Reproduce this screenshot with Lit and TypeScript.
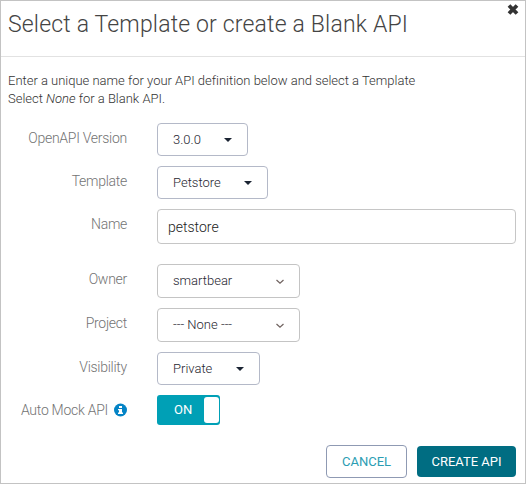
import { LitElement, html, css, svg } from "lit";
import { customElement, property } from "lit/decorators.js";

@customElement("select-box")
class SelectBox extends LitElement {
  @property() value = "";
  @property() arrow = "caret";
  static styles = css`
    :host {
      display: flex;
      box-sizing: border-box;
      align-items: center;
      justify-content: space-between;
      border: 1px solid #b4b9c8;
      border-radius: 4px;
      padding: 0 14px 0 15px;
      height: 33px;
      color: #262630;
      font-size: 13px;
      background: #fff;
    }
    :host([arrow="chevron"]) {
      height: 34px;
      padding-bottom: 1px;
      border-color: #c4c4c4;
    }
    svg { display: block; }
  `;
  render() {
    return html`<span>${this.value}</span>
      <svg width="10" height="8" viewBox="0 0 10 8">
        ${this.arrow === "caret"
          ? svg`<path d="M1 2h8L5 6z" fill="#1b2433" />`
          : svg`<path d="M1.500 3L5 6.300L8.500 3" fill="none" stroke="#6f625f" stroke-width="1.200" />`}
      </svg>`;
  }
}

@customElement("app-root")
class AppRoot extends LitElement {
  static styles = css`
    :host {
      display: flex;
      flex-direction: column;
      box-sizing: border-box;
      width: 526px;
      height: 484px;
      border: 1px solid #c3c3c3;
      background: #fff;
      position: relative;
      font-family: Roboto, sans-serif;
      font-weight: 300;
      color: #333;
    }
    header {
      box-sizing: border-box;
      height: 56px;
      border-bottom: 1px solid #e2e2e2;
      padding: 8px 0 0 7px;
    }
    h1 {
      margin: 0;
      font-size: 23px;
      line-height: 32px;
      font-weight: 300;
      letter-spacing: 0.17px;
      color: #444;
      white-space: nowrap;
    }
    .close { position: absolute; top: 1px; right: 5px; }
    .intro {
      margin: 15px 0 0 7px;
      font-size: 13px;
      line-height: 18px;
      letter-spacing: -0.01px;
      white-space: nowrap;
    }
    .form {
      display: grid;
      grid-template-columns: 126px 359px;
      column-gap: 30px;
      row-gap: 10px;
    }
    .upper {
      grid-template-rows: 33px 33px 35px;
      margin-top: 15px;
    }
    .lower {
      grid-template-rows: 34px 34px 33px 30px;
      margin-top: 20px;
    }
    .label {
      justify-self: end;
      display: flex;
      align-items: center;
      gap: 6px;
      height: 29px;
      font-size: 14px;
      letter-spacing: -0.27px;
      color: #737373;
      white-space: nowrap;
    }
    .w-version { width: 91px; }
    .w-template { width: 111px; }
    .w-owner { width: 143px; }
    .w-visibility { width: 103px; }
    .input {
      box-sizing: border-box;
      height: 35px;
      border: 1px solid #c6c6c6;
      border-radius: 4px;
      padding: 1px 10px 0;
      font-size: 14px;
      line-height: 33px;
      color: #222;
    }
    .toggle {
      box-sizing: border-box;
      display: flex;
      align-items: center;
      justify-content: space-between;
      width: 63px;
      height: 30px;
      padding: 0 1px 0 17px;
      border-radius: 3px;
      background: #00a0b6;
      color: #fff;
      font-size: 13px;
      line-height: 14px;
      font-weight: 400;
    }
    .knob { width: 15px; height: 26px; border-radius: 3px; background: #fff; }
    footer {
      display: flex;
      justify-content: flex-end;
      align-items: center;
      gap: 10px;
      padding-right: 9px;
      margin-top: 20px;
    }
    .btn {
      box-sizing: border-box;
      display: flex;
      align-items: center;
      justify-content: center;
      border-radius: 4px;
      font-size: 13px;
      font-weight: 400;
      white-space: nowrap;
    }
    .cancel {
      width: 81px;
      height: 33px;
      border: 1px solid #8f9ab3;
      color: #2b9db3;
    }
    .create { width: 99px; height: 31px; background: #006d82; color: #fff; }
  `;
  render() {
    return html`
      <header>
        <h1>Select a Template or create a Blank API</h1>
        <svg class="close" width="14" height="14" viewBox="0 0 14 14">
          <path d="M3 3.500l8 8M11 3.500l-8 8" stroke="#333" stroke-width="3.8" />
        </svg>
      </header>
      <div class="intro">
        Enter a unique name for your API definition below and select a Template<br />Select
        <i>None</i> for a Blank API.
      </div>
      <div class="form upper">
        <span class="label">OpenAPI Version</span>
        <select-box class="w-version" value="3.0.0" arrow="caret"></select-box>
        <span class="label">Template</span>
        <select-box class="w-template" value="Petstore" arrow="caret"></select-box>
        <span class="label">Name</span>
        <div class="input">petstore</div>
      </div>
      <div class="form lower">
        <span class="label">Owner</span>
        <select-box class="w-owner" value="smartbear" arrow="chevron"></select-box>
        <span class="label">Project</span>
        <select-box class="w-owner" value="--- None ---" arrow="chevron"></select-box>
        <span class="label">Visibility</span>
        <select-box class="w-visibility" value="Private" arrow="caret"></select-box>
        <span class="label">Auto Mock API
          <svg width="13" height="14" viewBox="0 0 13 14">
            <circle cx="6.5" cy="7" r="6.5" fill="#0484c6" />
            <path d="M5 3h3v2H5zM4 6h4v3.500h1V11H4V9.500h1V7.300H4z" fill="#fff" />
          </svg>
        </span>
        <div class="toggle">ON<span class="knob"></span></div>
      </div>
      <footer>
        <div class="btn cancel">CANCEL</div>
        <div class="btn create">CREATE API</div>
      </footer>
    `;
  }
}
